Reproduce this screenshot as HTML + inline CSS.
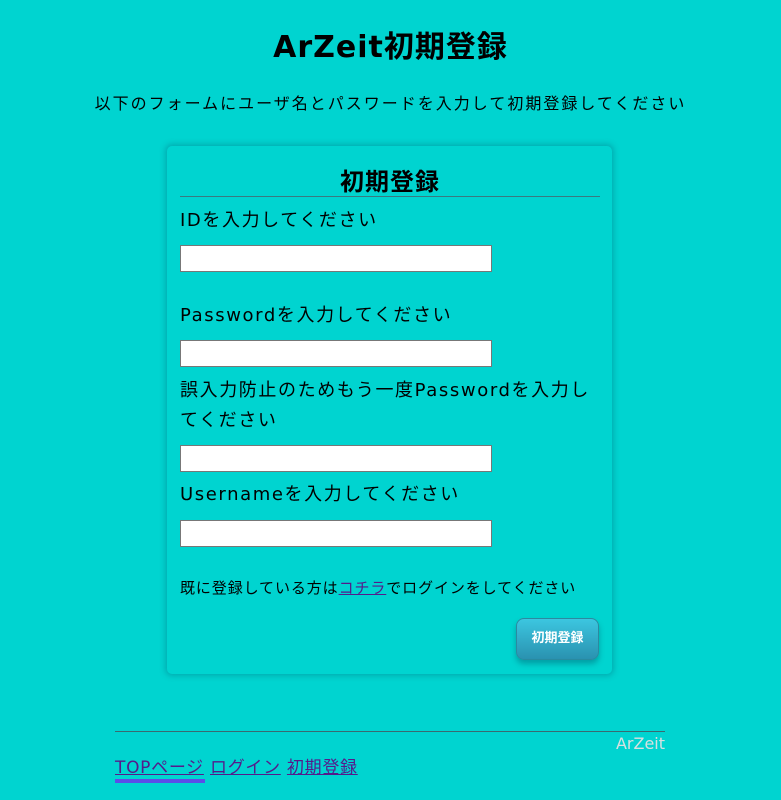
<!DOCTYPE html>
<html><head><meta charset="utf-8"><style>
body{margin:0;width:781px;height:800px;background:#00d4d0;font-family:"DejaVu Sans","Noto Sans CJK JP",sans-serif;position:relative;overflow:hidden;color:#000}
.a{position:absolute;white-space:nowrap}
.in{position:absolute;left:180px;width:310px;height:25px;background:#fff;border:1px solid #777}
.lb{position:absolute;left:180px;font-size:18px;line-height:30px;letter-spacing:1.6px}
a{color:#551a8b;text-decoration:underline}
</style></head><body>
<div class="a" style="left:0;width:781px;text-align:center;top:22px;font-size:30px;font-weight:bold;letter-spacing:1px">ArZeit初期登録</div>
<div class="a" style="left:0;width:781px;text-align:center;top:90px;font-size:16px;letter-spacing:2px;font-family:'Liberation Sans','Noto Sans CJK JP',sans-serif">以下のフォームにユーザ名とパスワードを入力して初期登録してください</div>
<div class="a" style="left:167px;top:146px;width:445px;height:528px;border-radius:5px;box-shadow:0 0 6px 2px rgba(0,100,120,0.35)"></div>
<div class="a" style="left:180px;width:420px;text-align:center;top:162px;font-size:24px;font-weight:bold;letter-spacing:1px">初期登録</div>
<div class="a" style="left:180px;top:196px;width:420px;height:1px;background:#3a7a80"></div>
<div class="lb" style="top:206px">IDを入力してください</div>
<div class="in" style="top:245px"></div>
<div class="lb" style="top:301px">Passwordを入力してください</div>
<div class="in" style="top:340px"></div>
<div class="lb" style="top:376px;width:420px;white-space:normal">誤入力防止のためもう一度Passwordを入力してください</div>
<div class="in" style="top:445px"></div>
<div class="lb" style="top:480px">Usernameを入力してください</div>
<div class="in" style="top:520px"></div>
<div class="a" style="left:180px;top:577px;font-size:15px;letter-spacing:0.9px">既に登録している方は<a>コチラ</a>でログインをしてください</div>
<div class="a" style="left:516px;top:618px;width:81px;height:40px;border:1px solid #2a8aa0;border-radius:8px;background:linear-gradient(#3cc6e0,#2a92b0);box-shadow:0 4px 6px rgba(0,80,100,0.4);color:#fff;font-size:13px;font-weight:bold;text-align:center;line-height:40px">初期登録</div>
<div class="a" style="left:115px;top:731px;width:550px;height:1px;background:#3a6a70"></div>
<div class="a" style="left:580px;width:85px;text-align:right;top:734px;font-size:16px;color:#d8e0e0">ArZeit</div>
<div class="a" style="left:115px;top:753px;font-size:17px;letter-spacing:0.7px"><a>TOPページ</a> <a>ログイン</a> <a>初期登録</a></div>
<div class="a" style="left:115px;top:779px;width:90px;height:4px;background:#5a4ee8"></div>
</body></html>
